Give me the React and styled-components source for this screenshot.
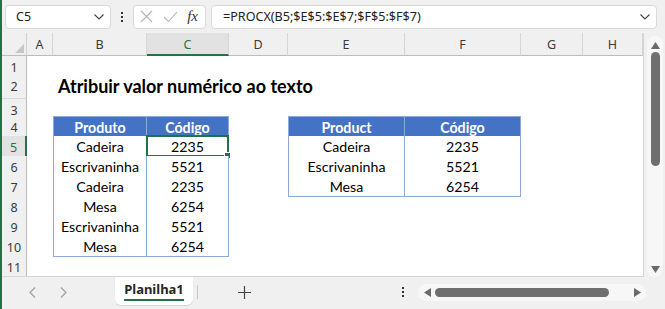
import React from 'react';
import styled, { createGlobalStyle } from 'styled-components';

const GlobalStyle = createGlobalStyle`
  html, body {
    margin: 0;
    padding: 0;
    background: #f0f0f0;
    overflow: hidden;
  }
`;

const GREEN = '#217346';
const UI_FONT = `"Noto Sans", "Open Sans", sans-serif`;
const CELL_FONT = `Lato, "Liberation Sans", sans-serif`;
const COLS = '25px 26px 94px 82px 59px 117px 116px 62px 60px';

const Window = styled.div`
  width: 665px;
  height: 309px;
  box-sizing: border-box;
  border-left: 2px solid ${GREEN};
  background: #f0f0f0;
  display: flex;
  flex-direction: column;
  font-family: ${UI_FONT};
`;

/* ---------- formula bar ---------- */
const FormulaBar = styled.div`
  height: 33px;
  display: flex;
  align-items: center;
  padding: 0 8px 0 3px;
  box-sizing: border-box;
`;

const Box = styled.div`
  height: 24px;
  box-sizing: border-box;
  background: #fff;
  border: 1px solid #d9d9d9;
  border-radius: 4px;
  display: flex;
  align-items: center;
`;

const NameBox = styled(Box)`
  width: 106px;
  padding: 0 6px 0 10px;
  justify-content: space-between;
  font-size: 12.5px;
  color: #222;
`;

const VDots = styled.div`
  width: 22px;
  display: flex;
  flex-direction: column;
  align-items: center;
  gap: 2px;
  span {
    width: 2px;
    height: 2px;
    background: #333;
  }
`;

const FxBox = styled(Box)`
  width: 73px;
  padding: 0 6px;
  justify-content: space-between;
  margin-right: 5px;
`;

const Fx = styled.span`
  font-family: "Liberation Serif", serif;
  font-style: italic;
  font-size: 15px;
  color: #333;
  padding-right: 1px;
`;

const FormulaInput = styled(Box)`
  flex: 1;
  padding: 0 6px 0 11px;
  justify-content: space-between;
  font-size: 12.6px;
  color: #222;
`;

/* ---------- sheet ---------- */
const SheetArea = styled.div`
  display: flex;
  height: 244px;
`;

const Grid = styled.div`
  width: 641px;
  background: #fff;
  border-bottom: 1px solid #d4d4d4;
  border-right: 1px solid #d4d4d4;
  display: flex;
  flex-direction: column;
`;

const SheetRow = styled.div`
  display: grid;
  grid-template-columns: ${COLS};
  height: ${p => p.$h}px;
`;

const Corner = styled.div`
  background: #f0f0f0;
  border-right: 1px solid #d0d0d0;
  border-bottom: 1px solid #bdbdbd;
  position: relative;
  &::after {
    content: '';
    position: absolute;
    right: 2px;
    bottom: 2px;
    border-left: 9px solid transparent;
    border-bottom: 9px solid #c6c6c6;
  }
`;

const ColHead = styled.div`
  background: ${p => (p.$active ? '#e2e2e2' : '#f0f0f0')};
  color: ${p => (p.$active ? GREEN : '#3b3b3b')};
  border-right: 1px solid #d6d6d6;
  border-bottom: ${p => (p.$active ? `2px solid ${GREEN}` : '1px solid #bdbdbd')};
  font-size: 12.5px;
  display: flex;
  align-items: center;
  justify-content: center;
  padding-top: 2px;
  box-sizing: border-box;
`;

const RowHead = styled.div`
  background: ${p => (p.$active ? '#e2e2e2' : '#f0f0f0')};
  color: ${p => (p.$active ? GREEN : '#3b3b3b')};
  border-right: ${p => (p.$active ? `2px solid ${GREEN}` : '1px solid #bdbdbd')};
  border-bottom: 1px solid #dadada;
  font-size: 12.5px;
  display: flex;
  align-items: center;
  justify-content: center;
  padding-top: 3px;
  box-sizing: border-box;
`;

const Cell = styled.div`
  position: relative;
  box-sizing: border-box;
  font-family: ${CELL_FONT};
  font-size: 14.2px;
  display: flex;
  align-items: center;
  justify-content: center;
  white-space: nowrap;
  padding-top: 1px;
  background: ${p => (p.$kind === 'th' ? '#4472c4' : '#fff')};
  font-weight: ${p => (p.$kind === 'th' ? 700 : 400)};
  color: ${p => (p.$kind === 'th' ? '#fff' : '#000')};
  ${p =>
    p.$kind &&
    `
    border-right: 1px solid #8eaadb;
    border-bottom: 1px solid #8eaadb;
  `}
  ${p => p.$left && 'border-left: 1px solid #8eaadb;'}
  ${p => p.$top && 'border-top: 1px solid #8eaadb;'}
`;

const Title = styled.div`
  font-family: ${CELL_FONT};
  font-weight: 700;
  font-size: 18px;
  white-space: nowrap;
  padding-left: 5px;
  display: flex;
  align-items: center;
  padding-top: 1px;
  color: #000;
`;

const Selection = styled.div`
  position: absolute;
  left: -1px;
  top: -1px;
  right: -1px;
  bottom: -1px;
  border: 2px solid ${GREEN};
  &::after {
    content: '';
    position: absolute;
    right: -4px;
    bottom: -4px;
    width: 5px;
    height: 5px;
    background: ${GREEN};
    border: 1px solid #fff;
  }
`;

/* ---------- scrollbars ---------- */
const VScroll = styled.div`
  width: 18px;
  margin: 3px 2px 0 3px;
  background: #f7f7f7;
  border-radius: 9px;
  display: flex;
  flex-direction: column;
  align-items: center;
  padding: 6px 0 4px;
  box-sizing: border-box;
`;

const VThumb = styled.div`
  width: 9px;
  height: 114px;
  margin-top: 3px;
  background: #6f6f6f;
  border-radius: 5px;
`;

const Spacer = styled.div`
  flex: 1;
`;

/* ---------- bottom bar ---------- */
const TabBar = styled.div`
  height: 32px;
  display: flex;
  align-items: flex-start;
`;

const NavArrows = styled.div`
  width: 113px;
  height: 30px;
  display: flex;
  align-items: center;
  gap: 24px;
  padding-left: 27px;
  box-sizing: border-box;
`;

const Tab = styled.div`
  width: 78px;
  height: 28px;
  background: #fff;
  border-radius: 0 0 6px 6px;
  box-shadow: 0 1px 1px rgba(0, 0, 0, 0.12);
  display: flex;
  justify-content: center;
  align-items: flex-start;
  padding-top: 4px;
  box-sizing: border-box;
`;

const TabLabel = styled.span`
  font-weight: 700;
  font-size: 13px;
  color: #262626;
  border-bottom: 2px solid ${GREEN};
  padding-bottom: 1px;
  line-height: 17px;
`;

const TabSep = styled.div`
  width: 1px;
  height: 14px;
  background: #c8c8c8;
  margin: 8px 0 0 4px;
`;

const AddSheet = styled.div`
  width: 92px;
  height: 30px;
  display: flex;
  align-items: center;
  justify-content: center;
`;

const BarDots = styled(VDots)`
  width: 16px;
  height: 30px;
  justify-content: center;
  margin-right: 7px;
`;

const HScroll = styled.div`
  width: 228px;
  height: 17px;
  margin: 7px 19px 0 0;
  background: #f7f7f7;
  border-radius: 9px;
  display: flex;
  align-items: center;
  padding: 0 5px 0 6px;
  box-sizing: border-box;
  gap: 4px;
`;

const HThumb = styled.div`
  width: 174px;
  height: 9px;
  background: #6f6f6f;
  border-radius: 5px;
`;

/* ---------- icons ---------- */
const Chevron = () => (
  <svg width="10" height="6" viewBox="0 0 10 6">
    <polyline points="0.5,0.5 5,5 9.5,0.5" fill="none" stroke="#444" strokeWidth="1.1" />
  </svg>
);

const Cross = () => (
  <svg width="13" height="13" viewBox="0 0 13 13">
    <path d="M1 1 L12 12 M12 1 L1 12" stroke="#b4b4b4" strokeWidth="1.1" />
  </svg>
);

const Check = () => (
  <svg width="15" height="12" viewBox="0 0 15 12">
    <polyline points="1,6 5.5,10.5 14,1" fill="none" stroke="#b4b4b4" strokeWidth="1.1" />
  </svg>
);

const Tri = ({ dir }) => {
  const pts = {
    up: '0,7 4.5,0 9,7',
    down: '0,0 9,0 4.5,7',
    left: '7,0 7,9 0,4.5',
    right: '0,0 0,9 7,4.5',
  }[dir];
  const vertical = dir === 'up' || dir === 'down';
  const w = vertical ? 9 : 7;
  const h = vertical ? 7 : 9;
  return (
    <svg width={w} height={h} viewBox={`0 0 ${w} ${h}`}>
      <polygon points={pts} fill="#6a6a6a" />
    </svg>
  );
};

const Arrow = ({ right }) => (
  <svg width="7" height="11" viewBox="0 0 7 11">
    <polyline
      points={right ? '1,0.5 6,5.5 1,10.5' : '6,0.5 1,5.5 6,10.5'}
      fill="none"
      stroke="#a0a0a0"
      strokeWidth="1.2"
    />
  </svg>
);

const Plus = () => (
  <svg width="13" height="13" viewBox="0 0 13 13">
    <path d="M6.5 0 V13 M0 6.5 H13" stroke="#444" strokeWidth="1.2" />
  </svg>
);

/* ---------- data ---------- */
const COLUMNS = ['A', 'B', 'C', 'D', 'E', 'F', 'G', 'H'];

const left = [
  ['Produto', 'Código'],
  ['Cadeira', '2235'],
  ['Escrivaninha', '5521'],
  ['Cadeira', '2235'],
  ['Mesa', '6254'],
  ['Escrivaninha', '5521'],
  ['Mesa', '6254'],
];

const right = [
  ['Product', 'Código'],
  ['Cadeira', '2235'],
  ['Escrivaninha', '5521'],
  ['Mesa', '6254'],
];

const ROW_HEIGHTS = [16, 28, 17, 20, 20, 20, 20, 20, 20, 20, 20];

const tableCells = (data, i, cols) => {
  const r = data[i];
  if (!r) return {};
  const kind = i === 0 ? 'th' : 'td';
  return {
    [cols[0]]: { kind, text: r[0], left: true, top: i === 0 },
    [cols[1]]: { kind, text: r[1], top: i === 0 },
  };
};

const rowCells = n => {
  if (n < 4) return {};
  return {
    ...tableCells(left, n - 4, ['B', 'C']),
    ...tableCells(right, n - 4, ['E', 'F']),
  };
};

const App = () => {
  return (
    <>
      <GlobalStyle />
      <Window>
        <FormulaBar>
          <NameBox>
            <span>C5</span>
            <Chevron />
          </NameBox>
          <VDots>
            <span />
            <span />
            <span />
          </VDots>
          <FxBox>
            <Cross />
            <Check />
            <Fx>fx</Fx>
          </FxBox>
          <FormulaInput>
            <span>=PROCX(B5;$E$5:$E$7;$F$5:$F$7)</span>
            <Chevron />
          </FormulaInput>
        </FormulaBar>

        <SheetArea>
          <Grid>
            <SheetRow $h={23}>
              <Corner />
              {COLUMNS.map(c => (
                <ColHead key={c} $active={c === 'C'}>
                  {c}
                </ColHead>
              ))}
            </SheetRow>
            {ROW_HEIGHTS.map((h, idx) => {
              const n = idx + 1;
              const cells = rowCells(n);
              return (
                <SheetRow key={n} $h={h}>
                  <RowHead $active={n === 5}>{n}</RowHead>
                  {COLUMNS.map(c => {
                    if (n === 2 && c === 'B') {
                      return <Title key={c}>Atribuir valor numérico ao texto</Title>;
                    }
                    const cell = cells[c];
                    if (!cell) return <div key={c} />;
                    return (
                      <Cell key={c} $kind={cell.kind} $left={cell.left} $top={cell.top}>
                        {cell.text}
                        {n === 5 && c === 'C' && <Selection />}
                      </Cell>
                    );
                  })}
                </SheetRow>
              );
            })}
          </Grid>
          <VScroll>
            <Tri dir="up" />
            <VThumb />
            <Spacer />
            <Tri dir="down" />
          </VScroll>
        </SheetArea>

        <TabBar>
          <NavArrows>
            <Arrow />
            <Arrow right />
          </NavArrows>
          <Tab>
            <TabLabel>Planilha1</TabLabel>
          </Tab>
          <TabSep />
          <AddSheet>
            <Plus />
          </AddSheet>
          <Spacer />
          <BarDots>
            <span />
            <span />
            <span />
          </BarDots>
          <HScroll>
            <Tri dir="left" />
            <HThumb />
            <Spacer />
            <Tri dir="right" />
          </HScroll>
        </TabBar>
      </Window>
    </>
  );
};

export default App;
